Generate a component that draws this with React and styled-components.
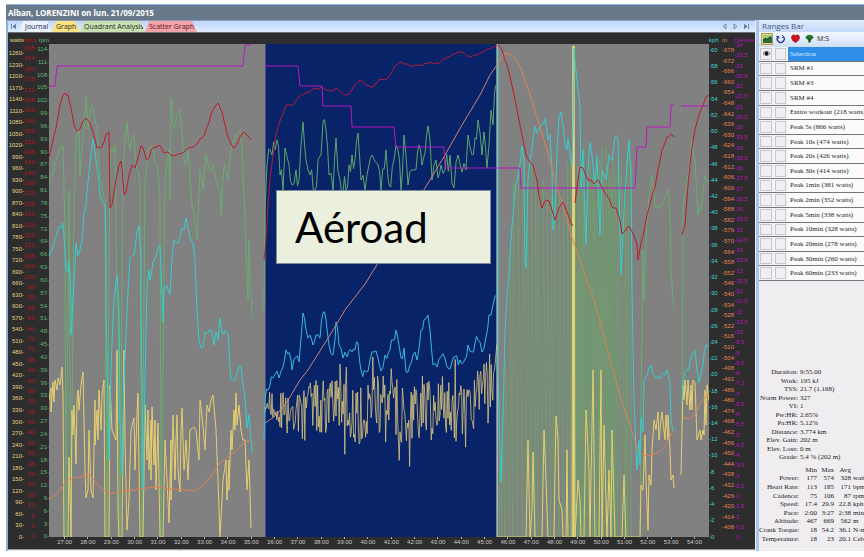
import React from 'react';
import styled, { createGlobalStyle, css } from 'styled-components';

const GlobalStyle = createGlobalStyle`
  *, *::before, *::after { box-sizing: border-box; }
  body { margin: 0; background: #fff; }
  button { border: 0; margin: 0; padding: 0; background: none; font: inherit; color: inherit; }
`;

const sans = css`font-family: "Liberation Sans", Arial, sans-serif;`;
const ui = css`font-family: "Open Sans", Tahoma, sans-serif;`;
const serif = css`font-family: "Liberation Serif", "Times New Roman", serif;`;

/* ---------- frame ---------- */
const Window = styled.div`
  margin: 4px 0 0 6px;
  display: flex;
  flex-direction: column;
  overflow: hidden;
`;
const TitleBar = styled.header`
  ${ui}
  height: 16px;
  padding-left: 2px;
  border-top: 1px solid #8fb0da;
  background: #68798c;
  color: #fff;
  font-size: 8px;
  font-weight: 700;
  line-height: 16px;
  white-space: nowrap;
`;
const Body = styled.div`
  display: flex;
  align-items: stretch;
`;
const Workspace = styled.main`
  flex: 1 1 0;
  min-width: 0;
  border-left: 2px solid #8faed8;
  border-right: 1px solid #e8effa;
`;
const TabBar = styled.nav`
  ${ui}
  height: 13px;
  display: flex;
  align-items: center;
  border-top: 1px solid #8c9db4;
  border-bottom: 1px solid #6d7077;
  background: linear-gradient(#bed7fb, #dfeafd);
`;
const Tab = styled.button`
  height: 11px;
  padding: 0 0 0 ${p => (p.$first ? 6 : 4)}px;
  width: ${p => p.$width}px;
  font-size: 7px;
  line-height: 11px;
  font-weight: 400;
  text-align: left;
  white-space: nowrap;
  color: ${p => p.$ink};
  background: ${p => p.$fill};
  clip-path: polygon(4px 0, calc(100% - 5px) 0, 100% 100%, 0 100%);
`;
const NavButton = styled.button`
  width: 11px;
  height: 11px;
  display: grid;
  place-items: center;
  color: #55739c;
`;
const NavGroup = styled.div`
  margin-left: auto;
  padding-right: 3px;
  display: flex;
`;

/* ---------- chart ---------- */
const Chart = styled.section`
  ${sans}
  display: grid;
  grid-template-columns: 41px minmax(0, 1fr) 46px;
  grid-template-rows: 11px 493px 12px;
  background: #2d2d2e;
  font-size: 6px;
  line-height: 8px;
`;
const AxisHeads = styled.div`
  display: grid;
  grid-template-columns: ${p => p.$cols};
  grid-column: ${p => p.$column};
  grid-row: 1;
  padding-top: 3px;
`;
const AxisHead = styled.span`
  color: ${p => p.$color};
  text-align: ${p => p.$align};
  white-space: nowrap;
`;
const Axes = styled.div`
  display: grid;
  grid-template-columns: ${p => p.$cols};
  grid-column: ${p => p.$column};
  grid-row: 2;
`;
const Axis = styled.ol`
  list-style: none;
  margin: ${p => p.$top}px 0 ${p => p.$bottom}px;
  padding: 0;
  display: flex;
  flex-direction: column;
  justify-content: space-between;
  color: ${p => p.$color};
  text-align: ${p => p.$align};
  white-space: nowrap;
`;
const AxisMark = styled.li`
  height: 8px;
  line-height: 8px;
`;
const Plot = styled.div`
  grid-column: 2;
  grid-row: 2;
  position: relative;
  background: #828182;
`;
const PlotSvg = styled.svg`
  display: block;
  width: 100%;
  height: 493px;
  polyline { fill: none; vector-effect: non-scaling-stroke; }
`;
const Note = styled.div`
  position: absolute;
  left: 34.4%;
  top: 146px;
  width: 32.5%;
  height: 74px;
  padding-left: 18px;
  border: 1px solid #7d8da0;
  background: #eaefde;
  color: #000;
  font-family: Lato, Calibri, sans-serif;
  font-size: 42px;
  line-height: 72px;
`;
const TimeAxis = styled.ol`
  grid-column: 2;
  grid-row: 3;
  list-style: none;
  margin: 0;
  padding: 0 3px 0 4px;
  display: flex;
  color: #c9c9c9;
`;
const TimeMark = styled.li`
  flex: 1 1 0;
  display: flex;
  flex-direction: column;
  align-items: center;
  &::before { content: ""; width: 1px; height: 2px; background: #b0b0b0; }
  line-height: 6px;
`;
const Footer = styled.footer`
  height: 2px;
  display: flex;
  border-top: 1px solid #9b99a2;
  background: #ece8ec;
`;
const FooterCell = styled.span`
  width: 173px;
  border-right: 1px solid #b9b5bc;
`;

/* ---------- side panel ---------- */
const Panel = styled.aside`
  flex: 0 0 108px;
  min-width: 0;
  border-left: 3px solid #a9c6ef;
  background: #efedf0;
  overflow: hidden;
  display: flex;
  flex-direction: column;
  color: #222;
`;
const PanelTitle = styled.h2`
  ${ui}
  margin: 0;
  height: 12px;
  padding-left: 3px;
  background: linear-gradient(#e2edfd, #c4d9f8);
  color: #3d5b86;
  font-size: 8px;
  line-height: 12px;
  font-weight: 400;
`;
const Toolbar = styled.div`
  ${ui}
  height: 15px;
  padding: 0 0 2px 2px;
  display: flex;
  align-items: center;
  gap: 2px;
  background: linear-gradient(#f2f7ff, #cfdff6);
  font-size: 7px;
`;
const Tool = styled.button`
  width: 12px;
  height: 12px;
  display: grid;
  place-items: center;
  background: ${p => (p.$on ? '#f2cf7c' : 'transparent')};
  outline: ${p => (p.$on ? '1px solid #b99a4e' : 'none')};
  outline-offset: -1px;
`;
const TextTool = styled.button`
  white-space: nowrap;
`;
const Ranges = styled.ul`
  ${serif}
  list-style: none;
  margin: 0;
  padding: 0;
  height: 234px;
  display: grid;
  grid-template-rows: repeat(16, 1fr);
  font-size: 7px;
`;
const Range = styled.li`
  display: grid;
  grid-template-columns: 14px 13px 1fr;
  column-gap: 1px;
  align-items: stretch;
  border-bottom: 1px solid #77767a;
  background: #f3f2f4;
`;
const Cell = styled.button`
  margin: 1px;
  border: 1px solid #c9c7cb;
  background: #f1eff2;
  display: grid;
  place-items: center;
`;
const RangeName = styled.button`
  padding-left: 2px;
  text-align: left;
  white-space: nowrap;
  color: ${p => (p.$on ? '#dcecff' : '#262626')};
  background: ${p => (p.$on ? '#2f8fe8' : '#fbfbfc')};
`;
const Summary = styled.dl`
  ${serif}
  margin: 87px 0 0;
  height: 94px;
  display: grid;
  grid-template-columns: 39px 1fr;
  grid-template-rows: repeat(11, 1fr);
  column-gap: 2px;
  font-size: 7px;
  line-height: 8px;
  white-space: nowrap;
`;
const Term = styled.dt`
  justify-self: end;
`;
const Value = styled.dd`
  margin: 0;
`;
const Stats = styled.table`
  ${serif}
  margin-top: 4px;
  width: 120px;
  height: 77px;
  table-layout: fixed;
  border-collapse: collapse;
  font-size: 7px;
  line-height: 8px;
  white-space: nowrap;
  th, td { padding: 0; font-weight: 400; text-align: right; }
  td:last-child { text-align: left; padding-left: 2px; }
`;
const Col = styled.col`
  width: ${p => p.$w}px;
`;

/* ---------- data ---------- */
const steps = (from, to, by) => {
  const out = [];
  for (let v = from; v >= to; v -= by) out.push(v);
  return out;
};
const leftAxes = [
  { name: 'watts', color: '#e5cf83', top: 5, marks: steps(1260, 0, 30) },
  { name: 'bpm', color: '#b3151f', top: 0, marks: steps(188, 0, 4) },
  { name: 'rpm', color: '#62b871', top: 1, marks: steps(114, 0, 3) },
];
const rightAxes = [
  { name: 'kph', color: '#3fd6d2', top: 2, bottom: -4, marks: steps(60, 0, 2) },
  { name: 'm', color: '#e58352', top: 2, bottom: 5, marks: steps(678, 408, 6) },
  { name: 'Celsius', color: '#b513b8', top: -3, bottom: -4, marks: steps(24, 0, 0.5) },
];
const minutes = Array.from({ length: 28 }, (_, i) => 27 + i);

const random = seed => () => {
  seed = (seed * 16807) % 2147483647;
  return seed / 2147483647;
};
const parse = text => text.trim().split(/\s+/).map(p => p.split(',').map(Number));
const line = points => points.map(p => p[0].toFixed(1) + ',' + p[1].toFixed(1)).join(' ');
const rough = (text, amount, step, seed) => {
  const pts = parse(text);
  const rnd = random(seed);
  const out = [];
  pts.forEach((p, i) => {
    out.push(p);
    const q = pts[i + 1];
    if (!q || Math.abs(q[1] - p[1]) > 70) return;
    const n = Math.floor((q[0] - p[0]) / step);
    for (let k = 1; k < n; k++) {
      const t = k / n;
      out.push([p[0] + (q[0] - p[0]) * t, p[1] + (q[1] - p[1]) * t + (rnd() - 0.5) * amount]);
    }
  });
  return line(out);
};

const temperature = [
  '49,86 55,86 57,66 243,66 245,45 251,45',
  '265,66 298,66 300,86 322,86 323,106 351,106 352,127 394,127 396,147 444,147 445,168 520,168 521,188 635,188 637,147 646,147 647,127 670,127 671,105 674,105',
  '681,106 709,106',
];
const heart = [
  '49,157 52,145 56,128 60,105 63,95 65,93 66,95 68,95 71,108 74,125 77,131 80,129 83,121 86,118 90,123 94,136 97,148 101,148 104,142 106,134 108,134 109,132 110,208 112,205 116,180 119,165 121,161 122,168 124,195 126,192 129,175 132,165 135,168 138,158 141,146 143,147 145,155 147,160 149,158 151,150 154,147 156,148 158,145 161,147 164,153 168,152 172,156 178,154 183,153 188,148 193,147 197,144 200,139 204,136 208,125 212,112 216,105 218,103 222,112 225,125 228,137 232,146 234,148 237,144 240,137 243,132 246,134 249,137 251,140',
  '264,260 266,240 268,205 270,180 273,155 276,135 281,118 287,104 293,105 299,97 306,93 312,90 320,88 322,87 327,90 332,91 336,88 341,92 346,95 350,93 354,86 360,80 366,85 373,87 377,83 380,79 386,80 390,75 395,66 400,62 404,64 412,66 419,65 429,63 438,63 445,59 453,54 459,52 464,53 469,57 476,55 483,52 490,49 497,45',
  '498,45 502,50 507,65 513,90 518,115 523,140 526,155 529,161 533,165 537,180 539,196 542,208 546,200 549,201 552,210 555,220 559,208 563,202 566,210 569,217 571,223 573,226',
  '575,203 578,180 580,167 583,168 586,176 588,180 591,180 594,184 598,180 603,190 609,198 612,207 616,208 620,220 622,234 626,230 629,226 633,233 637,244 638,260 641,243 643,236 647,215 651,200 655,187 658,170 662,150 667,137 671,134 674,137',
  '682,235 685,225 688,185 691,155 695,130 699,115 703,105 706,97 709,95',
];
const altitude = [
  '49,499 54,496 60,490 67,481 72,478 81,477 86,474 90,475 96,482 101,488 106,492 111,494 120,491 135,490 146,488 157,487 170,489 185,490 195,491 203,486 212,475 220,463 228,457 238,449 243,444 248,441 250,440',
  '265,423 274,417 284,406 290,397 300,380 308,370 330,335 345,310 365,284 378,263 430,180 445,155 462,125 480,95 490,75 497,65',
  '497,65 500,60 502,55 507,53 512,55 520,66 530,95 540,127 550,160 557,188 563,205 572,238 580,260 595,303 612,367 620,395 630,425 638,450 643,455 648,456 658,453 665,446 673,431',
  '683,418 690,419 696,412 702,401 709,393',
];
const speed = [
  ['49,257 52,250 57,234 60,227 63,223 65,250 66,268 68,272 69,261 70,275 71,300 71,335 73,300 75,265 76,243 78,256 80,250 82,240 84,215 86,205 88,182 91,155 93,139 96,160 99,182 100,195 103,203 105,205 106,240 106,300 108,420 109,460 111,368 114,300 117,275 119,310 120,420 122,475 124,380 127,310 130,258 134,255 137,232 139,226 141,257 141,310 143,470 143,490 145,380 147,287 149,270 150,280 153,262 156,257 160,245 161,270 163,322 164,290 167,285 170,295 172,257 174,240 178,243 180,238 182,228 184,230 186,218 188,228 190,238 193,243 195,260 197,310 199,340 201,348 203,347 205,332 208,333 211,330 214,345 216,332 218,340 220,318 222,332 228,334 230,368 231,379 234,381 238,370 241,367 243,385 245,398 247,428 249,415 251,440 252,453', 6],
  ['264,440 265,400 268,390 273,378 277,371 279,378 283,367 286,350 291,360 292,370 296,357 299,362 300,350 303,313 306,330 310,335 313,345 316,335 320,338 323,313 326,320 329,345 333,355 335,340 336,322 339,345 343,358 347,357 352,352 355,350 358,343 361,370 366,372 370,360 374,352 378,358 381,371 385,355 390,350 393,340 396,330 399,345 401,358 404,348 406,372 410,365 413,355 417,360 421,330 424,320 428,315 430,330 433,365 437,367 441,357 445,358 448,368 452,362 455,357 460,360 465,359 468,345 472,352 475,343 478,340 482,352 486,337 489,315 493,305 497,295', 12],
  ['498,50 498,370 500,450 501,482 503,420 505,330 508,285 512,225 516,183 519,170 522,146 524,160 525,260 526,268 528,180 530,160 533,140 535,126 537,133 540,126 545,119 548,140 550,135 552,170 553,230 555,215 557,150 559,118 561,112 563,125 565,145 567,150 568,138 570,155 572,165 574,80 574,48 577,80 580,105 581,190 583,150 585,220 586,245 588,170 590,143 592,155 595,185 597,155 600,235 602,170 606,180 609,155 612,160 615,137 618,140 620,230 621,275 624,210 627,160 629,140 631,180 632,290 634,400 636,450 637,470 639,440 640,465 641,418 643,432 644,381 647,375 649,368 651,365 654,375 657,378 660,379 664,374 667,370 670,385 671,421 673,431', 6],
  ['682,402 683,385 687,370 692,355 695,350 697,370 699,383 703,365 706,345 709,345', 12],
];
const cadence = [
  ['49,187 53,175 58,155 63,145 65,230 66,537 69,190 71,537 74,200 75,180 76,135 79,130 80,175 84,125 86,97 88,130 93,105 97,125 100,180 105,200 107,537 110,160 115,145 117,300 118,310 120,537 123,165 127,122 130,150 134,135 137,170 140,185 142,537 145,180 148,150 153,150 157,165 160,200 161,537 165,180 169,150 170,200 171,98 173,125 176,120 180,110 182,135 185,165 188,150 191,195 197,240 200,170 203,190 206,155 210,172 213,165 216,180 220,190 221,215 224,165 228,180 231,150 234,142 237,135 240,130 242,150 245,220 248,300 249,240 252,318', 14],
  ['264,310 265,210 267,165 272,155 277,140 280,175 283,190 285,148 289,165 292,185 296,170 299,180 303,122 306,160 310,175 315,190 318,160 321,155 323,122 326,130 329,175 333,190 336,138 340,180 346,190 349,165 352,155 355,160 358,133 361,180 365,190 369,165 372,155 378,165 381,190 386,150 389,185 394,160 398,150 401,190 404,135 408,185 413,170 419,145 422,165 428,126 430,140 432,180 436,160 438,178 441,165 445,170 450,155 454,188 458,155 462,172 466,170 468,135 472,155 478,120 482,155 484,132 487,168 489,145 491,110 493,125 496,85', 26],
  ['640,537 641,400 643,250 644,300 647,220 650,190 652,175 655,205 660,208 664,200 668,190 670,210 671,270 673,300 674,310', 6],
  ['682,430 683,210 686,190 690,160 692,140 695,160 698,215 701,210 705,175 709,185', 14],
];
const power = [
  '49,400 51,388 51,412 53,382 54,402 55,380 57,390 58,378 60,385 62,367 63,395 64,537 68,537 69,457 71,537 72,410 73,435 74,405 76,464 77,400 78,390 79,410 81,385 83,372 85,470 86,498 88,490 89,430 91,490 93,498 95,400 95,445 97,410 98,440 99,390 101,430 102,395 104,380 105,537 109,537 110,385 112,430 116,440 117,350 118,510 119,537 122,537 124,350 125,440 127,530 129,500 131,430 134,418 135,470 137,415 138,393 140,537 143,537 145,405 147,460 148,410 149,470 151,420 151,480 152,407 154,465 155,420 156,490 158,423 160,537 163,537 165,440 167,480 169,523 171,440 171,500 173,415 175,480 176,440 177,415 178,470 180,492 181,430 182,408 184,470 186,440 188,480 190,430 194,427 196,430 199,460 200,400 202,415 205,450 207,405 209,412 211,400 213,395 216,430 218,480 220,537 223,480 226,460 227,500 229,460 229,490 231,430 232,450 234,410 235,430 236,393 237,425 239,405 241,430 243,440 245,440 247,490 249,460 251,528',
  '498,537 526,537 528,440 530,537 532,510 533,452 535,537 542,537 544,430 546,480 548,537 554,537 556,416 558,440 559,500 562,510 563,537 566,537 567,450 568,537 572,537 573,46 574,46 575,537 578,480 580,500 581,537 584,537 586,410 587,430 589,470 590,537 593,370 595,537 599,537 601,370 602,537 604,425 607,537 609,470 611,537 612,430 615,537 622,537 624,475 626,537 640,537 641,485 643,490 645,435 646,480 648,530 649,475 651,485 652,450 654,420 656,430 658,412 659,440 661,420 662,412 665,440 666,415 668,440 668,415 670,450 671,480 673,475 674,488',
  '681,475 682,430 683,385 684,400 685,380 687,405 688,380 690,410 691,385 692,410 693,380 695,383 697,440 700,430 701,440 703,430 704,435 705,390 706,425 707,385 709,400',
];
const effort = (() => {
  const rnd = random(4127);
  const pts = [];
  for (let x = 264; x <= 497; x += 0.8) {
    const grow = Math.min(1, (x - 260) / 40);
    const centre = (x < 470 ? 410 : 410 - (x - 470) * 1.2) + Math.sin(x / 9) * 6;
    const peak = rnd() > 0.88 ? 1.9 : 1;
    pts.push([x, centre + (rnd() - 0.5) * (18 + 40 * grow) * peak]);
  }
  return line(pts);
})();
const pedalling = (() => {
  const rnd = random(77);
  const pts = [];
  let x = 499;
  while (x < 632) {
    const base = x < 512 ? 470 - (x - 499) * 18 : 200;
    pts.push([x, 537], [x + 0.5, base - rnd() * 55]);
    x += x > 571 && x < 616 ? 1.7 + rnd() : 2.4 + rnd() * 2.6;
  }
  return line(pts);
})();

const Trace = ({ points, color, width = 1, opacity = 1 }) => (
  <polyline points={points} stroke={color} strokeWidth={width} strokeOpacity={opacity} strokeLinejoin="round" />
);

const Traces = () => (
  <PlotSvg viewBox="49 44 660 493" preserveAspectRatio="none" role="img" aria-label="Workout graph">
    <rect x="265.5" y="44" width="231" height="493" fill="#092368" />
    <rect x="496.5" y="44" width="1.5" height="493" fill="#a5b5b5" />
    <Trace points={pedalling} color="#6ba56b" opacity={0.72} />
    {cadence.map(([p, a], i) => <Trace key={i} points={rough(p, a, 1.5, 31 + i)} color="#65b36d" opacity={0.9} />)}
    {power.map((p, i) => <Trace key={i} points={line(parse(p))} color="#e6cf70" />)}
    <Trace points={effort} color="#d8c47c" opacity={0.8} />
    <polyline points="573.5,46 573.5,537" stroke="#ead479" strokeWidth="2" />
    {speed.map(([p, a], i) => <Trace key={i} points={rough(p, a, 1.5, 11 + i)} color={i === 1 ? '#38b9df' : '#35cfcd'} />)}
    {altitude.map((p, i) => <Trace key={i} points={p} color={i === 1 ? '#c98479' : '#e08056'} />)}
    {heart.map((p, i) => <Trace key={i} points={rough(p, 2, 2, 51 + i)} color={i === 1 ? '#b51a3c' : '#c01a28'} />)}
    {temperature.map((p, i) => <Trace key={i} points={p} color="#b719c2" />)}
  </PlotSvg>
);

const ranges = [
  'Selection', 'SRM #1', 'SRM #3', 'SRM #4', 'Entire workout (218 watts)', 'Peak 5s (866 watts)',
  'Peak 10s (474 watts)', 'Peak 20s (426 watts)', 'Peak 30s (414 watts)', 'Peak 1min (381 watts)',
  'Peak 2min (352 watts)', 'Peak 5min (338 watts)', 'Peak 10min (328 watts)', 'Peak 20min (278 watts)',
  'Peak 30min (260 watts)', 'Peak 60min (233 watts)',
];
const summary = [
  ['Duration:', '9:55.00'], ['Work:', '195 kJ'], ['TSS:', '21.7 (1.168)'], ['Norm Power:', '327'],
  ['VI:', '1'], ['Pw:HR:', '2.65%'], ['Pa:HR:', '5.12%'], ['Distance:', '3.774 km'],
  ['Elev. Gain:', '202 m'], ['Elev. Loss:', '0 m'], ['Grade:', '5.4 %  (202 m)'],
];
const stats = [
  ['Power:', '177', '574', '328', 'watts'], ['Heart Rate:', '113', '185', '171', 'bpm'],
  ['Cadence:', '75', '106', '87', 'rpm'], ['Speed:', '17.4', '29.9', '22.8', 'kph'],
  ['Pace:', '2:00', '3:27', '2:38', 'min/km'], ['Altitude:', '467', '669', '562', 'm'],
  ['Crank Torque:', '18', '54.2', '36.1', 'N-m'], ['Temperature:', '18', '23', '20.1', 'Celsius'],
];

/* ---------- icons ---------- */
const Arrow = ({ d, filled }) => (
  <svg width="7" height="7" viewBox="0 0 7 7" fill={filled ? 'currentColor' : 'none'} stroke="currentColor" strokeWidth="0.8" aria-hidden="true"><path d={d} /></svg>
);
const EyeIcon = () => (
  <svg width="9" height="7" viewBox="0 0 9 7" aria-hidden="true">
    <path d="M1 3.5Q4.5-.8 8 3.5Q4.5 7.6 1 3.5Z" fill="#fff" stroke="#333" strokeWidth=".8" />
    <circle cx="4.5" cy="3.5" r="1.8" fill="#111" />
  </svg>
);
const GraphIcon = () => (
  <svg width="9" height="8" viewBox="0 0 9 8" aria-hidden="true">
    <rect width="9" height="8" fill="#286b3c" />
    <path d="M0 0H9V2L7 1.5L4 4L2.5 3L0 5Z" fill="#9ccd78" />
    <path d="M0 5L2.5 3.4L4 4.5L7 2" stroke="#163d28" fill="none" />
  </svg>
);
const CycleIcon = () => (
  <svg width="10" height="10" viewBox="0 0 10 10" fill="none" stroke="#22368f" strokeWidth="1.3" aria-hidden="true">
    <path d="M2 2.6A3.5 3.5 0 1 0 7.2 2.4" /><path d="M.3 2.4H2.8V4.8M6 1L7.4 2.4L6.2 4" strokeWidth="1" />
  </svg>
);
const HeartIcon = () => (
  <svg width="9" height="9" viewBox="0 0 9 9" aria-hidden="true">
    <path d="M4.5 8.5C2.2 7.4.4 5.3.6 3C.8.8 3.3.3 4.5 1.7C5.7.3 8.2.8 8.4 3C8.6 5.3 6.8 7.4 4.5 8.5Z" fill="#d4111d" stroke="#741019" strokeWidth=".7" />
  </svg>
);
const ShieldIcon = () => (
  <svg width="9" height="9" viewBox="0 0 9 9" aria-hidden="true">
    <path d="M.3 3.5L2 1.5L4.5.8L7 1.5L8.7 3.5L6 6L5.5 8.5H3.5L3 6Z" fill="#1d6422" />
    <path d="M2 3.5L4.5 2L7 3.5" stroke="#3c8a3d" fill="none" />
  </svg>
);

const tabs = [
  ['Journal', 33, '#eaf2fe', '#14264a'],
  ['Graph', 28, '#fbe483', '#2e280f'],
  ['Quadrant Analysis', 65, '#c9dfb4', '#1d2c18'],
  ['Scatter Graph', 52, '#f3a3aa', '#5a1721'],
];

export default function App() {
  return (
    <>
      <GlobalStyle />
      <Window>
        <TitleBar>Alban, LORENZINI on lun. 21/09/2015</TitleBar>
        <Body>
          <Workspace>
            <TabBar>
              <NavButton aria-label="First"><Arrow filled d="M1.5 1V6M5.5 1.5L3 3.5L5.5 5.5Z" /></NavButton>
              {tabs.map(([name, width, fill, ink], i) => (
                <Tab key={name} $width={width} $fill={fill} $ink={ink} $first={i === 0}>{name}</Tab>
              ))}
              <NavGroup>
                <NavButton aria-label="Previous"><Arrow d="M5 1L2 3.5L5 6Z" /></NavButton>
                <NavButton aria-label="Next"><Arrow d="M2 1L5 3.5L2 6Z" /></NavButton>
                <NavButton aria-label="Last"><Arrow filled d="M5.5 1V6M1.5 1.5L4 3.5L1.5 5.5Z" /></NavButton>
              </NavGroup>
            </TabBar>
            <Chart>
              <AxisHeads $column="1" $cols="16px 12px 13px">
                {leftAxes.map(a => <AxisHead key={a.name} $color={a.color} $align="right">{a.name}</AxisHead>)}
              </AxisHeads>
              <AxisHeads $column="3" $cols="13px 12px 21px">
                {rightAxes.map(a => <AxisHead key={a.name} $color={a.color} $align="left">{a.name}</AxisHead>)}
              </AxisHeads>
              <Axes $column="1" $cols="16px 12px 13px">
                {leftAxes.map(a => (
                  <Axis key={a.name} $color={a.color} $align="right" $top={a.top} $bottom={-4}>
                    {a.marks.map(m => <AxisMark key={m}>{m}-</AxisMark>)}
                  </Axis>
                ))}
              </Axes>
              <Plot>
                <Traces />
                <Note>Aéroad</Note>
              </Plot>
              <Axes $column="3" $cols="13px 12px 21px">
                {rightAxes.map(a => (
                  <Axis key={a.name} $color={a.color} $align="left" $top={a.top} $bottom={a.bottom}>
                    {a.marks.map(m => <AxisMark key={m}>-{m}</AxisMark>)}
                  </Axis>
                ))}
              </Axes>
              <TimeAxis>
                {minutes.map(m => <TimeMark key={m}>{m}:00</TimeMark>)}
              </TimeAxis>
            </Chart>
            <Footer><FooterCell /></Footer>
          </Workspace>
          <Panel>
            <PanelTitle>Ranges Bar</PanelTitle>
            <Toolbar>
              <Tool $on aria-label="Graph"><GraphIcon /></Tool>
              <Tool aria-label="Refresh"><CycleIcon /></Tool>
              <Tool aria-label="Heart rate"><HeartIcon /></Tool>
              <Tool aria-label="Zones"><ShieldIcon /></Tool>
              <TextTool>M:S</TextTool>
            </Toolbar>
            <Ranges>
              {ranges.map((name, i) => (
                <Range key={name}>
                  <Cell aria-label={`Show ${name}`}>{i === 0 && <EyeIcon />}</Cell>
                  <Cell aria-label={`Mark ${name}`} />
                  <RangeName $on={i === 0}>{name}</RangeName>
                </Range>
              ))}
            </Ranges>
            <Summary>
              {summary.map(([term, value]) => (
                <React.Fragment key={term}><Term>{term}</Term><Value>{value}</Value></React.Fragment>
              ))}
            </Summary>
            <Stats>
              <colgroup><Col $w={40} /><Col $w={18} /><Col $w={17} /><Col $w={17} /><Col $w={28} /></colgroup>
              <thead><tr><th /><th>Min</th><th>Max</th><th>Avg</th><th /></tr></thead>
              <tbody>
                {stats.map(([name, ...cells]) => (
                  <tr key={name}><th scope="row">{name}</th>{cells.map((c, i) => <td key={i}>{c}</td>)}</tr>
                ))}
              </tbody>
            </Stats>
          </Panel>
        </Body>
      </Window>
    </>
  );
}
